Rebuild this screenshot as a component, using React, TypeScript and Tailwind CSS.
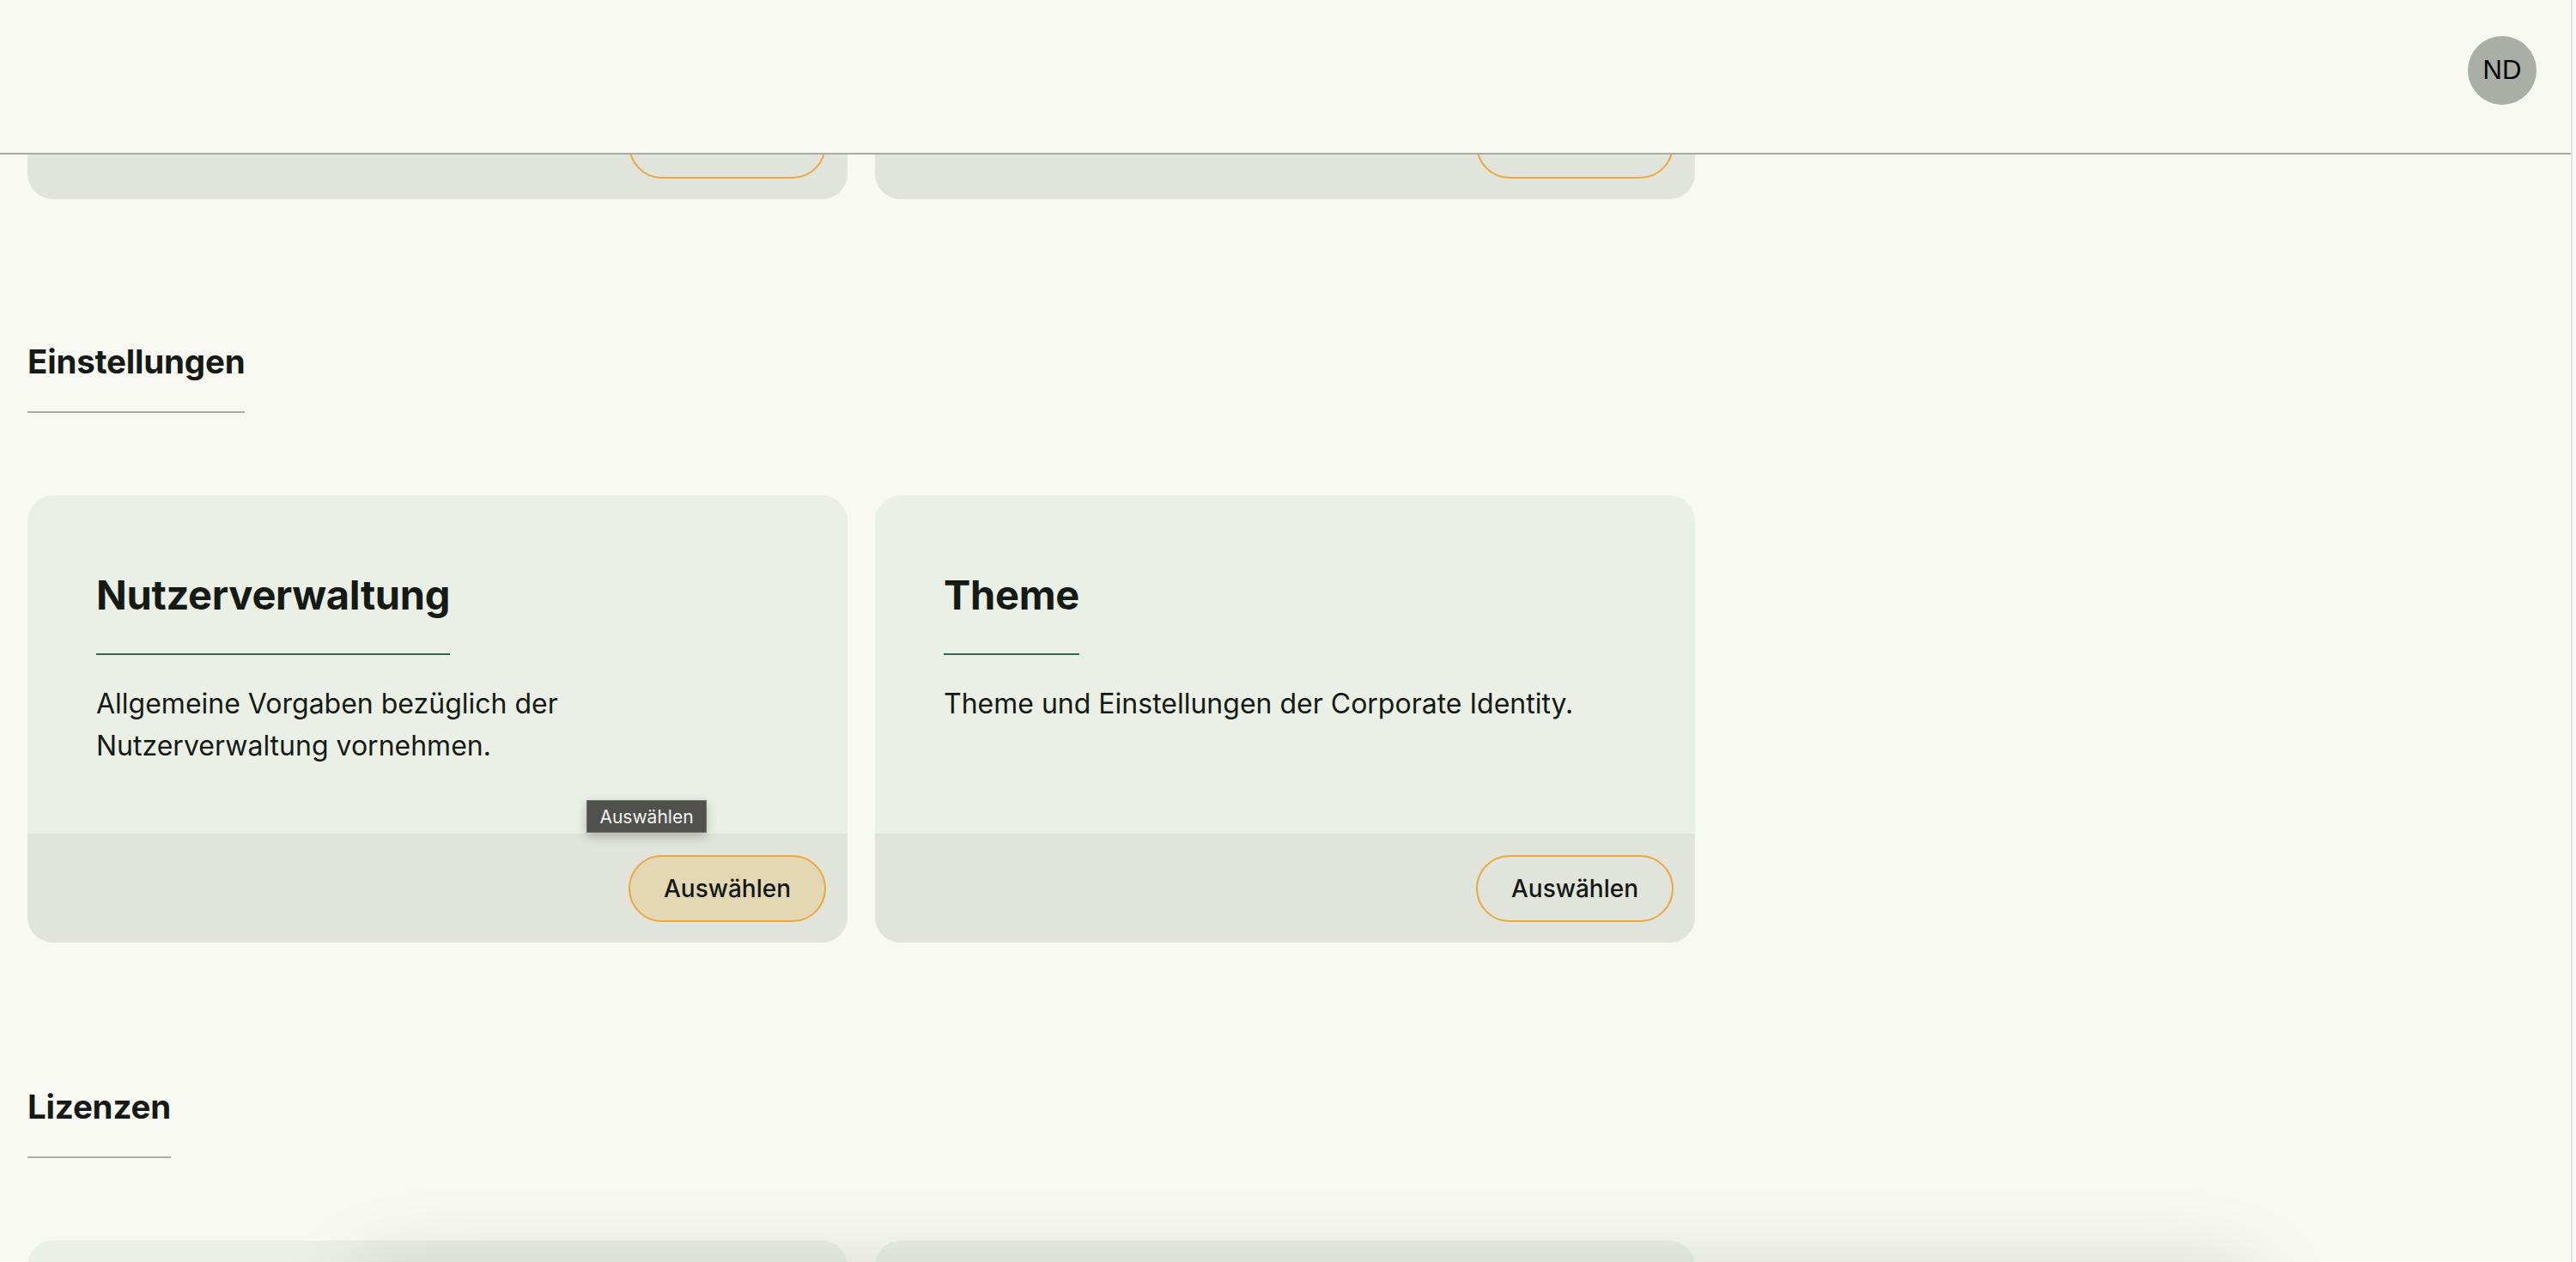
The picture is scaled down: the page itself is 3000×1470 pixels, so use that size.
import React from "react";

const font = { fontFamily: "Inter, 'Noto Sans', 'Liberation Sans', sans-serif" };

function SelectButton({ hover = false }: { hover?: boolean }) {
  return (
    <button
      className={
        "h-[78px] w-[230px] rounded-full border-2 border-[#eba83f] text-[28px] font-medium text-[#141813] " +
        (hover ? "bg-[#e3d7b4]" : "bg-transparent")
      }
    >
      Auswählen
    </button>
  );
}

function Card({
  title,
  text,
  hover = false,
  tooltip = false,
  button = true,
}: {
  title?: string;
  text?: string;
  hover?: boolean;
  tooltip?: boolean;
  button?: boolean;
}) {
  return (
    <div className="relative flex h-[521px] flex-col overflow-hidden rounded-[30px] bg-[#eaf0e5]">
      <div className="flex-1 px-[80px] pt-[88px]">
        {title && (
          <>
            <div className="w-fit border-b-2 border-[#2f6b45] pb-[40px]">
              <h3 className="text-[47px] font-bold leading-[56px] tracking-[-0.3px] text-[#151a14]">{title}</h3>
            </div>
            <p className="mt-[32px] text-[32px] leading-[49px] text-[#151a14]">{text}</p>
          </>
        )}
      </div>
      <div className="flex h-[127px] items-center justify-end bg-[#e1e4da] pr-[25px]">
        {button && <SelectButton hover={hover} />}
      </div>
      {tooltip && (
        <div className="absolute left-[651px] top-[355px] flex h-[38px] w-[140px] items-center justify-center border border-[#6d6e6a] bg-[#50514d] pt-[2px] text-[21px] text-[#f2f2ef] shadow-[0_4px_12px_rgba(0,0,0,0.25)]">
          Auswählen
        </div>
      )}
    </div>
  );
}

function SectionHeading({ children }: { children: React.ReactNode }) {
  return (
    <div className="w-fit border-b-2 border-[#a9ada5] pb-[34px] pt-[2px]">
      <h2 className="text-[38.5px] font-bold leading-[47px] tracking-[-0.2px] text-[#151a14]">{children}</h2>
    </div>
  );
}

export default function App() {
  return (
    <div className="relative h-[1470px] w-full overflow-hidden bg-[#f8f9f3]" style={font}>
      {/* header */}
      <header className="absolute left-0 right-[6px] top-0 z-20 flex h-[180px] items-start justify-end border-b-2 border-[#a8ada4] bg-[#f8f9f3] pr-[40px] pt-[42px]">
        <div
          className="flex h-[80px] w-[80px] items-center justify-center rounded-full bg-[#a9aea6] text-[31px] text-black"
          style={{ fontFamily: "'Liberation Sans', Arial, sans-serif" }}
        >
          ND
        </div>
      </header>

      {/* scrollbar track */}
      <div className="absolute bottom-0 right-0 top-0 z-30 w-[6px] border-l-2 border-[#e3e3e1] bg-[#fafaf7]" />

      <main className="pl-[32px]">
        <div className="mt-[-289px] grid grid-cols-[955px_955px] gap-[32px]">
          <Card />
          <Card />
        </div>

        <div className="mt-[164px]">
          <SectionHeading>Einstellungen</SectionHeading>
        </div>
        <div className="mt-[96px] grid grid-cols-[955px_955px] gap-[32px]">
          <Card
            title="Nutzerverwaltung"
            text="Allgemeine Vorgaben bezüglich der Nutzerverwaltung vornehmen."
            hover
            tooltip
          />
          <Card title="Theme" text="Theme und Einstellungen der Corporate Identity." />
        </div>

        <div className="mt-[166px]">
          <SectionHeading>Lizenzen</SectionHeading>
        </div>
        <div className="mt-[96px] grid grid-cols-[955px_955px] gap-[32px]">
          <Card button={false} />
          <Card button={false} />
        </div>
      </main>

      {/* shadow of an element just below the viewport */}
      <div className="absolute left-[420px] right-[380px] top-[1490px] z-10 h-[120px] rounded-[40px] bg-[#f0f1ec] shadow-[0_0_90px_20px_rgba(0,0,0,0.13)]" />
    </div>
  );
}
